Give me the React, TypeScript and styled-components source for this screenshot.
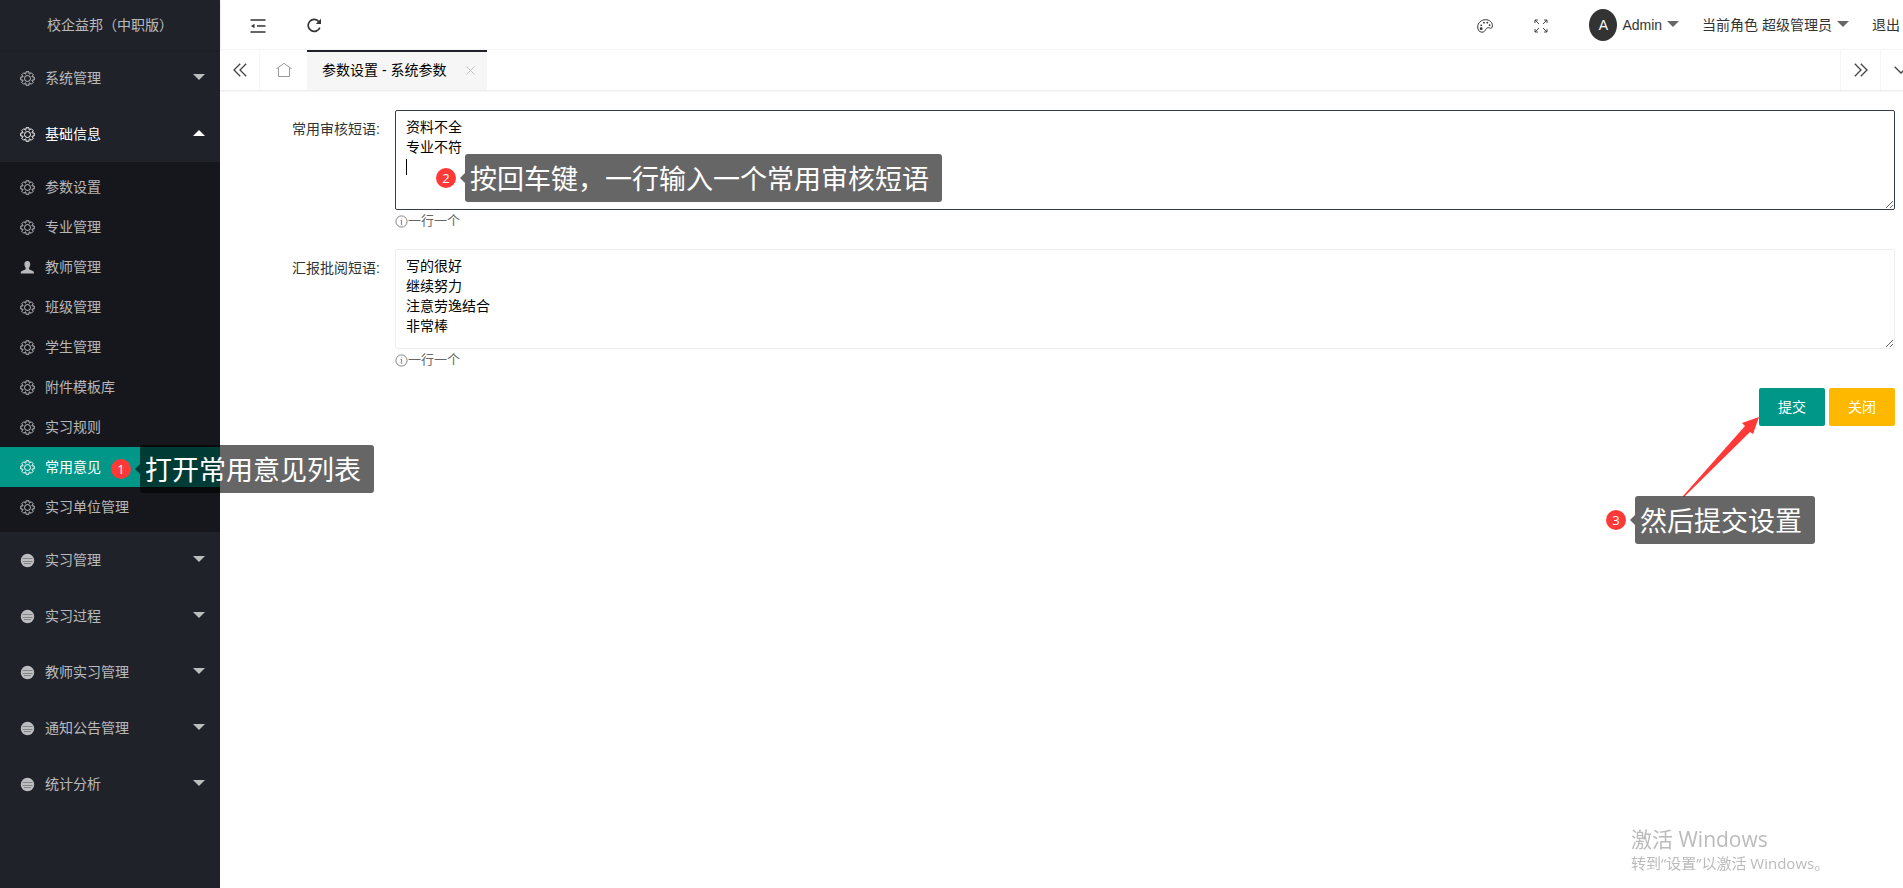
import React from "react";
import styled, { createGlobalStyle, css } from "styled-components";

const latin = `"Liberation Sans", "Noto Sans CJK SC", sans-serif`;
const humanist = `"Open Sans", "Noto Sans CJK SC", sans-serif`;

const GlobalStyle = createGlobalStyle`
  * { box-sizing: border-box; }
  body { margin: 0; background: #fff; color: #333; font: 14px/20px ${latin}; overflow-x: hidden; }
  button, textarea { font: inherit; color: inherit; }
  button { border: 0; padding: 0; background: none; cursor: pointer; }
  a { color: inherit; text-decoration: none; }
  ul { margin: 0; padding: 0; list-style: none; }
  svg { display: block; flex: none; }
`;

/* ---------- icons ---------- */

const gearOutline = (() => {
  const points: string[] = [];
  const teeth = 8;
  for (let i = 0; i < teeth; i++) {
    const mid = (i * 2 * Math.PI) / teeth - Math.PI / 2;
    [
      [-0.34, 4.9],
      [-0.22, 6.9],
      [0.22, 6.9],
      [0.34, 4.9],
    ].forEach(([offset, r]) => {
      points.push(`${(7.5 + r * Math.cos(mid + offset)).toFixed(2)} ${(7.5 + r * Math.sin(mid + offset)).toFixed(2)}`);
    });
  }
  return `M${points.join("L")}Z`;
})();

const GearIcon = () => (
  <svg width="15" height="15" viewBox="0 0 15 15" fill="none" stroke="currentColor" strokeLinejoin="round">
    <path d={gearOutline} />
    <circle cx="7.5" cy="7.5" r="3" />
  </svg>
);

const UserIcon = () => (
  <svg width="15" height="15" viewBox="0 0 15 15" fill="currentColor">
    <path d="M7.3 1C9.4 1 10.3 2.5 10.2 4.5C10.1 6.3 9.5 7.2 9 7.9V9.3L12.8 10.9C13.7 11.3 14 12 14 13.500H.7C.7 12 1 11.3 1.9 10.9L5.7 9.3V7.9C5.2 7.2 4.5 6.3 4.4 4.5C4.3 2.5 5.2 1 7.3 1Z" />
  </svg>
);

const DiscIcon = () => (
  <svg width="15" height="15" viewBox="0 0 15 15">
    <circle cx="7.5" cy="7.5" r="6.7" fill="currentColor" />
    <path d="M2.500 5.5H12.500M2.500 8.5H12.500M4 10.500H11" stroke="#20222a" strokeOpacity=".35" />
  </svg>
);

const CollapseIcon = () => (
  <svg width="16" height="14" viewBox="0 0 16 14" fill="none" stroke="currentColor" strokeWidth="1.5">
    <path d="M.5 1H15.5M7 7H15.5M.5 13H15.5" />
    <path d="M1 7L4.5 4.800V9.2Z" fill="currentColor" stroke="none" />
  </svg>
);

const RefreshIcon = () => (
  <svg width="15" height="15" viewBox="0 0 15 15" fill="none" stroke="currentColor" strokeWidth="1.7">
    <path d="M12.8 9.6A6 6 0 1 1 11.9 3.7" />
    <path d="M14 .8V6H8.800Z" fill="currentColor" stroke="none" />
  </svg>
);

const PaletteIcon = () => (
  <svg width="16" height="14" viewBox="0 0 16 14" fill="none" stroke="currentColor">
    <path d="M8.600 .7C12.400 .7 15.400 3.300 15.400 6.600C15.400 9.100 14.200 9.600 12.600 8.900C10.600 8.200 9.500 9 8.700 10.500C7.800 12.300 6.800 13.300 4.900 13.200C2.300 13 .7 10.800 .7 8C.7 3.800 4.200 .7 8.600 .7Z" />
    <circle cx="4.200" cy="9.700" r="1.400" fill="currentColor" stroke="none" />
    <circle cx="4.200" cy="6.300" r=".9" fill="currentColor" stroke="none" />
    <circle cx="7" cy="3.700" r=".9" fill="currentColor" stroke="none" />
    <circle cx="10.300" cy="3.700" r=".9" fill="currentColor" stroke="none" />
    <circle cx="12.600" cy="6.200" r=".9" fill="currentColor" stroke="none" />
  </svg>
);

const FullscreenIcon = () => (
  <svg width="14" height="14" viewBox="0 0 14 14" fill="none" stroke="currentColor" strokeWidth=".9">
    <path d="M1 4V1H4M1 1L5 5M10 1H13V4M13 1L9 5M1 10V13H4M1 13L5 9M13 10V13H10M13 13L9 9" />
  </svg>
);

const DoubleChevron = ({ flip }: { flip?: boolean }) => (
  <svg width="14" height="14" viewBox="0 0 14 14" fill="none" stroke="currentColor" strokeWidth="1.3">
    <path d={flip ? "M.8 .7L7 7L.8 13.3M6.8 .7L13 7L6.8 13.3" : "M7.2 .7L1 7L7.2 13.3M13.2 .7L7 7L13.2 13.3"} />
  </svg>
);

const ChevronDown = () => (
  <svg width="14" height="8" viewBox="0 0 14 8" fill="none" stroke="currentColor" strokeWidth="1.3">
    <path d="M.7 .7L7 7L13.3 .7" />
  </svg>
);

const HomeIcon = () => (
  <svg width="16" height="16" viewBox="0 0 16 16" fill="none" stroke="currentColor">
    <path d="M.5 6.800L8 1.300L15.500 6.800M2.500 5.500V14.500H13.500V5.500" />
  </svg>
);

const CloseIcon = () => (
  <svg width="9" height="9" viewBox="0 0 9 9" fill="none" stroke="currentColor">
    <path d="M.5 .5L8.500 8.500M8.500 .5L.5 8.500" />
  </svg>
);

const InfoIcon = () => (
  <svg width="13" height="13" viewBox="0 0 13 13" fill="none" stroke="currentColor" strokeWidth=".8">
    <circle cx="6.500" cy="6.500" r="5.600" />
    <path d="M5.500 5.500H6.700L6.200 9.300H7.300" />
    <circle cx="6.800" cy="3.700" r=".5" fill="currentColor" stroke="none" />
  </svg>
);

/* ---------- shell ---------- */

const Shell = styled.div`
  display: flex;
  min-height: 100vh;
`;

const Sidebar = styled.aside`
  flex: none;
  width: 220px;
  background: #20222a;
  color: rgba(255, 255, 255, 0.7);
`;

const Brand = styled.div`
  height: 50px;
  line-height: 50px;
  text-align: center;
  box-shadow: 0 1px 2px rgba(0, 0, 0, 0.15);
`;

const Caret = styled.span<{ $up?: boolean }>`
  border: 6px solid transparent;
  ${({ $up }) =>
    $up
      ? css`border-top: 0; border-bottom-color: currentColor;`
      : css`border-bottom: 0; border-top-color: currentColor;`}
`;

const GroupButton = styled.button<{ $open?: boolean }>`
  display: flex;
  align-items: center;
  gap: 10px;
  width: 100%;
  height: 56px;
  padding: 0 15px 0 20px;
  text-align: left;
  ${({ $open }) => $open && css`color: #fff;`}
  ${Caret} { margin: 0 0 2px auto; }
`;

const SubMenu = styled.ul`
  padding: 5px 0;
  background: rgba(0, 0, 0, 0.3);
`;

const SubItem = styled.li`
  position: relative;
`;

const SubLink = styled.a<{ $active?: boolean }>`
  display: flex;
  align-items: center;
  gap: 10px;
  height: 40px;
  padding-left: 20px;
  ${({ $active }) => $active && css`background: #009688; color: #fff;`}
`;

const Workspace = styled.div`
  flex: 1;
  min-width: 0;
  overflow: hidden;
`;

const TopBar = styled.header`
  display: flex;
  align-items: center;
  height: 50px;
  padding: 0 3px 0 30px;
  border-bottom: 1px solid #f6f6f6;
`;

const ToolGroup = styled.div<{ $end?: boolean }>`
  display: flex;
  align-items: center;
  gap: 41px;
  ${({ $end }) => $end && css`margin-left: auto;`}
`;

const AccountGroup = styled.nav`
  display: flex;
  align-items: center;
  gap: 23px;
`;

const IconButton = styled.button`
  margin-top: 2px;
`;

const MenuButton = styled.button`
  display: flex;
  align-items: center;
  gap: 5px;
  ${Caret} { margin-bottom: 2px; color: #666; }
`;

const Avatar = styled.span`
  width: 28px;
  height: 32px;
  border-radius: 50%;
  background: #333;
  color: #fff;
  line-height: 32px;
`;

/* ---------- page tabs ---------- */

const TabBar = styled.div`
  display: flex;
  height: 40px;
  margin-right: -17px;
  box-shadow: 0 1px 2px rgba(0, 0, 0, 0.1);
`;

const TabControl = styled.button<{ $side?: "left" | "right"; $wide?: boolean }>`
  display: flex;
  align-items: center;
  justify-content: center;
  width: ${({ $wide }) => ($wide ? 47 : 40)}px;
  color: ${({ $wide }) => ($wide ? "#999" : "#444")};
  ${({ $side }) => $side && css`border-${$side === "left" ? "right" : "left"}: 1px solid #f6f6f6;`}
`;

const Tab = styled.div`
  display: flex;
  align-items: center;
  gap: 20px;
  padding: 0 12px 2px 15px;
  border-top: 2px solid #20222a;
  background: #f6f6f6;
  color: #000;
  button { color: #c2c2c2; }
`;

const TabSpacer = styled.div`
  flex: 1;
`;

/* ---------- form ---------- */

const Form = styled.form`
  display: grid;
  gap: 17px;
  padding: 20px 8px 20px 0;
`;

const FieldRow = styled.div`
  display: grid;
  grid-template-columns: 175px 1fr;
`;

const FieldLabel = styled.label`
  padding: 9px 15px 9px 0;
  text-align: right;
`;

const FieldBody = styled.div`
  position: relative;
`;

const TextArea = styled.textarea<{ $active?: boolean }>`
  display: block;
  width: 100%;
  height: 100px;
  padding: 6px 10px;
  border: 1px solid ${({ $active }) => ($active ? "#393d49" : "#eee")};
  border-radius: 2px;
  outline: 0;
  background: #fff;
  color: #000;
  caret-color: transparent;
  resize: vertical;
`;

const TextCursor = styled.span`
  position: absolute;
  left: 11px;
  top: 49px;
  width: 1px;
  height: 16px;
  background: #000;
`;

const Hint = styled.p`
  display: flex;
  align-items: center;
  margin: 0;
  color: #666;
  font-size: 13px;
  line-height: 22px;
`;

const Actions = styled.div`
  position: relative;
  display: flex;
  justify-content: flex-end;
  gap: 4px;
`;

const ActionButton = styled.button<{ $tone: string }>`
  height: 38px;
  padding: 0 19px;
  border-radius: 2px;
  background: ${({ $tone }) => $tone};
  color: #fff;
`;

/* ---------- guide annotations ---------- */

const CalloutRoot = styled.div<{ $top: number; $left?: number; $right?: number }>`
  position: absolute;
  z-index: 2;
  top: ${({ $top }) => $top}px;
  ${({ $left }) => $left !== undefined && css`left: ${$left}px;`}
  ${({ $right }) => $right !== undefined && css`right: ${$right}px;`}
  display: flex;
  align-items: center;
  gap: 9px;
  color: #fff;
  white-space: nowrap;
`;

const Badge = styled.span`
  width: 20px;
  height: 20px;
  border-radius: 50%;
  background: #ff3838;
  font: 13px/20px ${humanist};
  text-align: center;
`;

const Bubble = styled.span`
  position: relative;
  height: 48px;
  padding: 0 13px 0 5px;
  border-radius: 3px;
  background: rgba(0, 0, 0, 0.6);
  font-size: 27px;
  line-height: 52px;
  &::before {
    content: "";
    position: absolute;
    right: 100%;
    top: 19px;
    border: 5px solid transparent;
    border-left: 0;
    border-right-color: rgba(0, 0, 0, 0.6);
  }
`;

const Pointer = styled.svg`
  position: absolute;
  top: 29px;
  right: 135px;
`;

const Watermark = styled.div`
  position: fixed;
  left: calc(100% - 272px);
  bottom: 14px;
  color: #bbb;
  font: 15px/22px ${humanist};
  white-space: nowrap;
  pointer-events: none;
  strong { display: block; font-size: 21px; font-weight: 400; line-height: 26px; }
`;

type CalloutProps = { step: number; text: string; top: number; left?: number; right?: number };

const Callout = ({ step, text, top, left, right }: CalloutProps) => (
  <CalloutRoot $top={top} $left={left} $right={right}>
    <Badge>{step}</Badge>
    <Bubble>{text}</Bubble>
  </CalloutRoot>
);

const subItems = ["参数设置", "专业管理", "教师管理", "班级管理", "学生管理", "附件模板库", "实习规则", "常用意见", "实习单位管理"];
const closedGroups = ["实习管理", "实习过程", "教师实习管理", "通知公告管理", "统计分析"];

export default function App() {
  return (
    <Shell lang="zh-CN">
      <GlobalStyle />
      <Sidebar>
        <Brand>校企益邦（中职版）</Brand>
        <nav>
          <GroupButton><GearIcon />系统管理<Caret /></GroupButton>
          <GroupButton $open aria-expanded="true"><GearIcon />基础信息<Caret $up /></GroupButton>
          <SubMenu>
            {subItems.map((name) => (
              <SubItem key={name}>
                <SubLink href="#" $active={name === "常用意见"}>
                  {name === "教师管理" ? <UserIcon /> : <GearIcon />}
                  {name}
                </SubLink>
                {name === "常用意见" && <Callout step={1} text="打开常用意见列表" top={-2} left={111} />}
              </SubItem>
            ))}
          </SubMenu>
          {closedGroups.map((name) => (
            <GroupButton key={name}><DiscIcon />{name}<Caret /></GroupButton>
          ))}
        </nav>
      </Sidebar>
      <Workspace>
        <TopBar>
          <ToolGroup>
            <IconButton aria-label="侧边伸缩"><CollapseIcon /></IconButton>
            <IconButton aria-label="刷新"><RefreshIcon /></IconButton>
          </ToolGroup>
          <ToolGroup $end>
            <IconButton aria-label="主题"><PaletteIcon /></IconButton>
            <IconButton aria-label="全屏"><FullscreenIcon /></IconButton>
            <AccountGroup>
              <MenuButton><Avatar>A</Avatar>Admin<Caret /></MenuButton>
              <MenuButton>当前角色 超级管理员<Caret /></MenuButton>
              <a href="#">退出</a>
            </AccountGroup>
          </ToolGroup>
        </TopBar>
        <TabBar>
          <TabControl $side="left" aria-label="向左"><DoubleChevron /></TabControl>
          <TabControl $wide aria-label="主页"><HomeIcon /></TabControl>
          <Tab>
            参数设置 - 系统参数
            <button aria-label="关闭标签"><CloseIcon /></button>
          </Tab>
          <TabSpacer />
          <TabControl $side="right" aria-label="向右"><DoubleChevron flip /></TabControl>
          <TabControl $side="right" aria-label="更多"><ChevronDown /></TabControl>
        </TabBar>
        <Form onSubmit={(event) => event.preventDefault()}>
          <FieldRow>
            <FieldLabel htmlFor="audit">常用审核短语:</FieldLabel>
            <FieldBody>
              <TextArea id="audit" $active defaultValue={"资料不全\n专业不符\n"} />
              <TextCursor />
              <Callout step={2} text="按回车键，一行输入一个常用审核短语" top={44} left={41} />
              <Hint><InfoIcon />一行一个</Hint>
            </FieldBody>
          </FieldRow>
          <FieldRow>
            <FieldLabel htmlFor="report">汇报批阅短语:</FieldLabel>
            <FieldBody>
              <TextArea id="report" defaultValue={"写的很好\n继续努力\n注意劳逸结合\n非常棒"} />
              <Hint><InfoIcon />一行一个</Hint>
            </FieldBody>
          </FieldRow>
          <Actions>
            <ActionButton type="submit" $tone="#009688">提交</ActionButton>
            <ActionButton type="button" $tone="#ffb800">关闭</ActionButton>
            <Pointer width="78" height="81" viewBox="0 0 78 81" fill="#ff3838">
              <path d="M77 0L60 6L63 9L1 79L2 80L68 15L71 17Z" />
            </Pointer>
            <Callout step={3} text="然后提交设置" top={108} right={80} />
          </Actions>
        </Form>
      </Workspace>
      <Watermark>
        <strong>激活 Windows</strong>
        转到“设置”以激活 Windows。
      </Watermark>
    </Shell>
  );
}
